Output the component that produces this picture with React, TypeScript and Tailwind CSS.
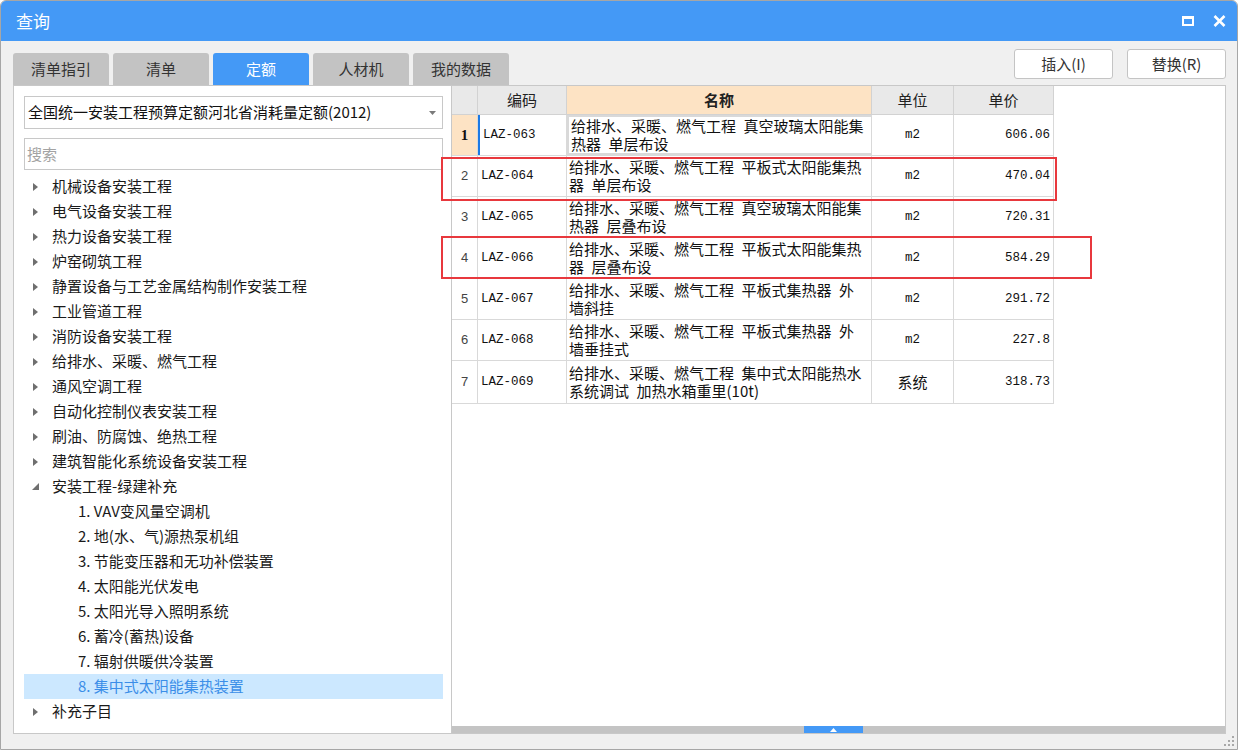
import React from 'react';

const cjk = "font-['Microsoft_YaHei','Noto_Sans_CJK_SC',sans-serif]";
const mono = "font-['Liberation_Mono','Noto_Sans_CJK_SC',monospace]";

const tabs = ['清单指引', '清单', '定额', '人材机', '我的数据'];

const tree = [
  '机械设备安装工程',
  '电气设备安装工程',
  '热力设备安装工程',
  '炉窑砌筑工程',
  '静置设备与工艺金属结构制作安装工程',
  '工业管道工程',
  '消防设备安装工程',
  '给排水、采暖、燃气工程',
  '通风空调工程',
  '自动化控制仪表安装工程',
  '刷油、防腐蚀、绝热工程',
  '建筑智能化系统设备安装工程',
];

const children = [
  '1. VAV变风量空调机',
  '2. 地(水、气)源热泵机组',
  '3. 节能变压器和无功补偿装置',
  '4. 太阳能光伏发电',
  '5. 太阳光导入照明系统',
  '6. 蓄冷(蓄热)设备',
  '7. 辐射供暖供冷装置',
  '8. 集中式太阳能集热装置',
];

// \u2002 = en space, matches the half-width gap of the original grid font
const rows = [
  { no: '1', code: 'LAZ-063', name: ['给排水、采暖、燃气工程\u2002真空玻璃太阳能集', '热器\u2002单层布设'], unit: 'm2', price: '606.06' },
  { no: '2', code: 'LAZ-064', name: ['给排水、采暖、燃气工程\u2002平板式太阳能集热', '器\u2002单层布设'], unit: 'm2', price: '470.04' },
  { no: '3', code: 'LAZ-065', name: ['给排水、采暖、燃气工程\u2002真空玻璃太阳能集', '热器\u2002层叠布设'], unit: 'm2', price: '720.31' },
  { no: '4', code: 'LAZ-066', name: ['给排水、采暖、燃气工程\u2002平板式太阳能集热', '器\u2002层叠布设'], unit: 'm2', price: '584.29' },
  { no: '5', code: 'LAZ-067', name: ['给排水、采暖、燃气工程\u2002平板式集热器\u2002外', '墙斜挂'], unit: 'm2', price: '291.72' },
  { no: '6', code: 'LAZ-068', name: ['给排水、采暖、燃气工程\u2002平板式集热器\u2002外', '墙垂挂式'], unit: 'm2', price: '227.8' },
  { no: '7', code: 'LAZ-069', name: ['给排水、采暖、燃气工程\u2002集中式太阳能热水', '系统调试\u2002加热水箱重里(10t)'], unit: '系统', price: '318.73' },
];

function Collapsed() {
  return (
    <svg width="5" height="8" viewBox="0 0 5 8" className="shrink-0">
      <path d="M0 0 L5 4 L0 8 Z" fill="#6f6f6f" />
    </svg>
  );
}

function Expanded() {
  return (
    <svg width="7" height="7" viewBox="0 0 7 7" className="shrink-0">
      <path d="M7 0 L7 7 L0 7 Z" fill="#6f6f6f" />
    </svg>
  );
}

export default function App() {
  return (
    <div className={`w-[1238px] h-[750px] relative flex flex-col bg-[#f0f0f0] border border-[#a6a6a6] rounded-t-[6px] overflow-hidden ${cjk}`}>
      {/* title bar */}
      <div className="h-[40px] bg-[#4499f6] flex items-center justify-between pl-[15px] pr-[11px] shrink-0">
        <span className="text-white text-[17px]">查询</span>
        <div className="flex items-center gap-[19px]">
          <div className="w-[12px] h-[10px] border-2 border-t-[3px] border-white" />
          <svg width="13" height="12" viewBox="0 0 13 12">
            <path d="M1.5 1 L11.5 11 M11.5 1 L1.5 11" stroke="white" strokeWidth="2.6" />
          </svg>
        </div>
      </div>

      <div className="flex-1 flex flex-col pl-[12px] pr-[11px] pt-[8px] pb-[15px] min-h-0">
        {/* tabs + buttons */}
        <div className="h-[36px] flex justify-between shrink-0">
          <div className="flex items-end gap-[4px]">
            {tabs.map((t) => (
              <div
                key={t}
                className={`w-[96px] h-[32px] rounded-t-[3px] flex items-center justify-center text-[15px] ${
                  t === '定额' ? 'bg-[#4499f6] text-white' : 'bg-[#c3c3c3] text-[#333]'
                }`}
              >
                {t}
              </div>
            ))}
          </div>
          <div className="flex gap-[14px]">
            <button className="w-[99px] h-[30px] bg-white border border-[#c4c4c4] rounded-[3px] text-[15px] text-[#333]">插入(I)</button>
            <button className="w-[99px] h-[30px] bg-white border border-[#c4c4c4] rounded-[3px] text-[15px] text-[#333]">替换(R)</button>
          </div>
        </div>

        {/* panels */}
        <div className="flex-1 flex min-h-0">
          {/* left panel */}
          <div className="w-[439px] bg-white border border-[#c8c8c8] pl-[10px] pr-[8px] pt-[10px] flex flex-col">
            <div className="h-[33px] border border-[#c8c8c8] flex items-center justify-between pl-[3px] pr-[6px]">
              <span className="text-[15px] text-[#111]">全国统一安装工程预算定额河北省消耗量定额(2012)</span>
              <svg width="7" height="4" viewBox="0 0 7 4">
                <path d="M0 0 L7 0 L3.5 4 Z" fill="#7a7a7a" />
              </svg>
            </div>
            <div className="h-[32px] mt-[9px] border border-[#c8c8c8] flex items-center pl-[2px] text-[15px] text-[#a3a3a3]">搜索</div>
            <div className="mt-[4px] flex flex-col">
              {tree.map((t) => (
                <div key={t} className="h-[25px] flex items-center text-[15px] text-[#1a1a1a]">
                  <div className="w-[28px] flex justify-start pl-[9px]"><Collapsed /></div>
                  <span>{t}</span>
                </div>
              ))}
              <div className="h-[25px] flex items-center text-[15px] text-[#1a1a1a]">
                <div className="w-[28px] flex justify-start pl-[8px]"><Expanded /></div>
                <span>安装工程-绿建补充</span>
              </div>
              {children.map((c, i) => (
                <div
                  key={c}
                  className={`h-[25px] flex items-center text-[15px] pl-[54px] ${
                    i === 7 ? 'bg-[#cce8ff] text-[#3b8ee8]' : 'text-[#1a1a1a]'
                  }`}
                >
                  {c}
                </div>
              ))}
              <div className="h-[25px] flex items-center text-[15px] text-[#1a1a1a]">
                <div className="w-[28px] flex justify-start pl-[9px]"><Collapsed /></div>
                <span>补充子目</span>
              </div>
            </div>
          </div>

          {/* right panel */}
          <div className="flex-1 bg-white border border-l-0 border-[#c8c8c8] flex flex-col">
            <div className="flex flex-col w-[602px]">
              <div className="h-[29px] flex bg-[#e9e9e9] border-b border-[#d2d2d2] text-[15px] text-[#222]">
                <div className="w-[26px] border-r border-[#d2d2d2]" />
                <div className="w-[89px] border-r border-[#d2d2d2] flex items-center justify-center">编码</div>
                <div className="w-[305px] border-r border-[#d2d2d2] bg-[#fde3c4] flex items-center justify-center font-bold">名称</div>
                <div className="w-[82px] border-r border-[#d2d2d2] flex items-center justify-center">单位</div>
                <div className="w-[100px] border-r border-[#d2d2d2] flex items-center justify-center">单价</div>
              </div>
              {rows.map((r, i) => (
                <div key={r.no} className={`${i === 6 ? 'h-[43px]' : 'h-[41px]'} flex border-b border-[#d9d9d9]`}>
                  <div
                    className={`w-[26px] border-r border-[#d9d9d9] flex items-center justify-center ${
                      i === 0
                        ? "bg-[#fde3c4] font-bold font-['Liberation_Serif',serif] text-[15px] text-[#111]"
                        : "font-['Liberation_Sans',sans-serif] text-[13px] text-[#444]"
                    }`}
                  >
                    {r.no}
                  </div>
                  <div
                    className={`w-[89px] border-r border-[#d9d9d9] flex items-center pl-[3px] text-[12.5px] text-[#111] ${mono} ${
                      i === 0 ? 'border-l-2 border-l-[#1b7ae6] pl-[1px]' : ''
                    }`}
                  >
                    {r.code}
                  </div>
                  <div
                    className={`w-[305px] border-r border-[#d9d9d9] flex flex-col justify-center pl-[2px] text-[15px] leading-[18px] text-[#111] whitespace-nowrap overflow-hidden ${
                      i === 0 ? 'border-2 border-[#8a8a8a] pl-[1px]' : ''
                    }`}
                  >
                    {r.name.map((l) => (
                      <div key={l} className="h-[18px]">{l}</div>
                    ))}
                  </div>
                  <div
                    className={`w-[82px] border-r border-[#d9d9d9] flex items-center justify-center text-[#111] ${
                      r.unit === 'm2' ? `${mono} text-[12.5px]` : 'text-[15px]'
                    }`}
                  >
                    {r.unit}
                  </div>
                  <div className={`w-[100px] border-r border-[#d9d9d9] flex items-center justify-end pr-[3px] text-[12.5px] text-[#111] ${mono}`}>
                    {r.price}
                  </div>
                </div>
              ))}
            </div>
            <div className="flex-1" />
            <div className="h-[7px] bg-[#c4c4c4] flex shrink-0">
              <div className="ml-[352px] w-[59px] h-[7px] bg-[#4499f6] flex items-center justify-center">
                <svg width="7" height="4" viewBox="0 0 7 4">
                  <path d="M0 4 L3.5 0 L7 4 Z" fill="white" />
                </svg>
              </div>
            </div>
          </div>
        </div>
      </div>

      {/* annotation boxes */}
      <div className="absolute left-[440px] top-[156px] w-[616px] h-[44px] border-2 border-[#e8383d] pointer-events-none" />
      <div className="absolute left-[440px] top-[235px] w-[651px] h-[43px] border-2 border-[#e8383d] pointer-events-none" />

      {/* resize grip */}
      <svg className="absolute right-[3px] bottom-[3px]" width="10" height="10" viewBox="0 0 10 10">
        <rect x="8" y="0" width="2" height="2" fill="#a8a8a8" />
        <rect x="4" y="4" width="2" height="2" fill="#a8a8a8" />
        <rect x="8" y="4" width="2" height="2" fill="#a8a8a8" />
        <rect x="0" y="8" width="2" height="2" fill="#a8a8a8" />
        <rect x="4" y="8" width="2" height="2" fill="#a8a8a8" />
        <rect x="8" y="8" width="2" height="2" fill="#a8a8a8" />
      </svg>
    </div>
  );
}
